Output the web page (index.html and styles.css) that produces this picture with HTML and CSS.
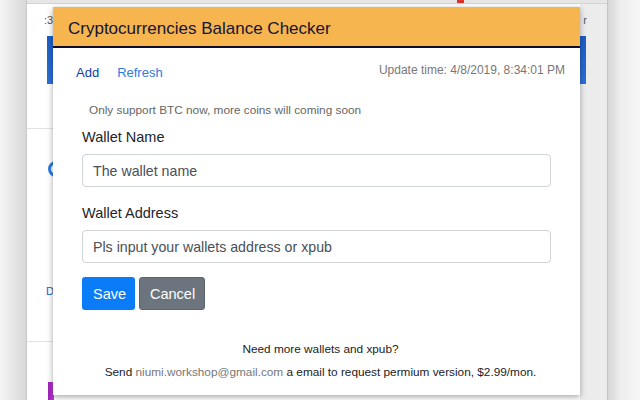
FILE: index.html
```html
<!DOCTYPE html>
<html lang="en">
<head>
    <meta charset="UTF-8">
    <title>Cryptocurrencies Balance Checker</title>
    <link rel="stylesheet" href="styles.css">
</head>
<body>
    <div class="desk">
        <div class="shade-left"></div>
        <div class="window">
            <div class="window-top"><span class="tab-mark"></span></div>
            <div class="window-page">
                <div class="side-left">
                    <span class="bg-text">:3</span>
                    <div class="blue-bar"></div>
                    <div class="bg-line"></div>
                    <div class="circle"></div>
                    <span class="bg-link">De</span>
                    <div class="bg-line"></div>
                    <div class="purple"></div>
                </div>
                <div class="middle"></div>
                <div class="side-right">
                    <span class="bg-text">r</span>
                    <div class="blue-bar"></div>
                    <div class="bg-line"></div>
                </div>
            </div>
        </div>
        <div class="shade-right"></div>
    </div>

    <div class="popup">
        <header class="popup-header">Cryptocurrencies Balance Checker</header>
        <div class="popup-body">
            <nav class="toolbar">
                <a class="add" href="#">Add</a>
                <a class="refresh" href="#">Refresh</a>
                <span class="update">Update time: 4/8/2019, 8:34:01 PM</span>
            </nav>
            <p class="notice">Only support BTC now, more coins will coming soon</p>
            <form class="wallet-form">
                <label for="wname">Wallet Name</label>
                <input id="wname" type="text" placeholder="The wallet name">
                <label for="waddr">Wallet Address</label>
                <input id="waddr" type="text" placeholder="Pls input your wallets address or xpub">
                <div class="actions">
                    <button type="button" class="btn save">Save</button>
                    <button type="button" class="btn cancel">Cancel</button>
                </div>
            </form>
            <footer class="promo">
                <p>Need more wallets and xpub?</p>
                <p>Send <span class="mail">niumi.workshop@gmail.com</span> a email to request permium version, $2.99/mon.</p>
            </footer>
        </div>
    </div>
</body>
</html>
```

FILE: styles.css
```css
body {
    margin: 0;
    font-family: "Liberation Sans", Arial, sans-serif;
    width: 640px;
    height: 400px;
    overflow: hidden;
}

/* fundo: janela do navegador desfocada */
.desk {
    display: flex;
    height: 400px;
}

.shade-left {
    width: 26px;
    background: linear-gradient(to right, #f4f4f4, #d9d9d9);
    border-right: 1px solid #c9c9c9;
}

.shade-right {
    flex: 1;
    background: linear-gradient(to right, #d6d6d6, #eeeeee 40%, #f6f6f6);
    border-left: 1px solid #c4c4c4;
}

.window {
    width: 580px;
    display: flex;
    flex-direction: column;
    background: #fff;
}

.window-top {
    height: 4px;
    background: #e6e6e6;
    border-bottom: 1px solid #d4d4d4;
    padding-left: 430px;
}

.tab-mark {
    display: block;
    width: 7px;
    height: 3px;
    background: #e0302a;
}

.window-page {
    flex: 1;
    display: flex;
}

.side-left {
    width: 26px;
    display: flex;
    flex-direction: column;
}

.middle {
    flex: 1;
}

.side-right {
    width: 27px;
    background: #ececec;
    display: flex;
    flex-direction: column;
    align-items: flex-end;
}

.bg-text {
    font-size: 11px;
    color: #555;
    height: 32px;
    line-height: 32px;
    padding-left: 17px;
}

.side-right .bg-text {
    padding: 0 20px 0 0;
}

.blue-bar {
    height: 48px;
    width: 100%;
    background: linear-gradient(#1d5ec4, #2d6fd8);
}

.side-left .blue-bar {
    margin-left: 20px;
    width: 6px;
}

.side-right .blue-bar {
    width: 100%;
    margin-right: 21px;
}

.bg-line {
    height: 1px;
    margin-top: 44px;
    background: #e2e2e2;
}

.circle {
    width: 16px;
    height: 16px;
    margin: 32px 0 0 21px;
    border: 3px solid #2b7de0;
    border-radius: 50%;
    box-sizing: border-box;
}

.bg-link {
    font-size: 11px;
    color: #1b5cc8;
    margin-top: 108px;
    padding-left: 19px;
}

.side-left .bg-line:nth-of-type(3) {
    margin-top: 14px;
}

.purple {
    width: 6px;
    height: 30px;
    margin: 40px 0 0 21px;
    background: linear-gradient(to right, #9b21b8, #c43ad6);
}

/* popup da extensão */
.popup {
    position: absolute;
    left: 53px;
    top: 7px;
    width: 527px;
    height: 388px;
    background: #fff;
    box-shadow: 0 2px 6px rgba(0, 0, 0, 0.35);
    display: flex;
    flex-direction: column;
}

.popup-header {
    height: 39px;
    line-height: 43px;
    background: #f6b54e;
    border-bottom: 2px solid #0d0c2c;
    color: #141433;
    font-size: 17px;
    padding-left: 15px;
}

.popup-body {
    flex: 1;
    display: flex;
    flex-direction: column;
    padding: 0 15px 0 23px;
}

.toolbar {
    display: flex;
    align-items: center;
    height: 48px;
    font-size: 13px;
}

.toolbar a {
    text-decoration: none;
}

.add {
    color: #0b3fa8;
    margin-right: 18px;
}

.refresh {
    color: #2a7be4;
}

.update {
    margin-left: auto;
    font-size: 12px;
    color: #777;
    padding-bottom: 5px;
}

.notice {
    margin: 7px 0 0 13px;
    font-size: 11.8px;
    color: #666;
}

.wallet-form {
    display: flex;
    flex-direction: column;
    padding: 0 6px;
    width: 469px;
}

.wallet-form label {
    font-size: 14.5px;
    color: #212529;
    margin: 12px 0 9px;
}

.wallet-form label + input + label {
    margin-top: 18px;
}

.wallet-form input {
    height: 33px;
    box-sizing: border-box;
    border: 1px solid #ced4da;
    border-radius: 4px;
    padding: 0 10px;
    font-family: inherit;
    font-size: 14.2px;
    color: #495057;
}

.wallet-form input::placeholder {
    color: #495057;
}

.actions {
    display: flex;
    gap: 4px;
    margin-top: 14px;
}

.btn {
    height: 33px;
    border: 1px solid transparent;
    border-radius: 3px;
    font-family: inherit;
    font-size: 14.5px;
    color: #fff;
    padding: 0 10px;
}

.save {
    background: #0a7cf8;
    width: 53px;
}

.cancel {
    background: #6c757d;
    border-color: #5d656c;
    width: 66px;
}

.promo {
    margin-top: auto;
    padding-bottom: 7px;
    text-align: center;
    font-size: 11.8px;
    color: #222;
}

.promo p {
    margin: 0 0 9px;
}

.mail {
    color: #777;
}
```
